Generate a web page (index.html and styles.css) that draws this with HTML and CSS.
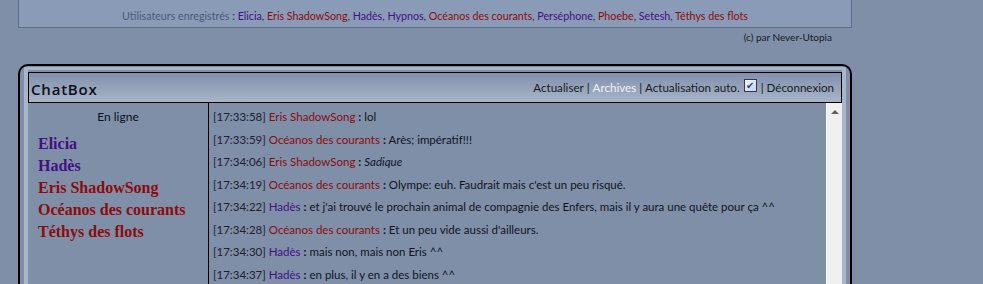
FILE: index.html
```html
<!DOCTYPE html>
<html lang="fr">

<head>
  <meta charset="UTF-8">
  <title>ChatBox</title>
  <link rel="stylesheet" href="styles.css">
</head>

<body>
  <div class="page">
    <div class="online-box">
      <span class="label">Utilisateurs enregistrés</span> :
      <span class="user-purple">Elicia</span>, <span class="user-red">Eris ShadowSong</span>,
      <span class="user-purple">Hadès</span>, <span class="user-purple">Hypnos</span>,
      <span class="user-red">Océanos des courants</span>, <span class="user-purple">Perséphone</span>,
      <span class="user-red">Phoebe</span>, <span class="user-purple">Setesh</span>,
      <span class="user-red">Téthys des flots</span>
    </div>
    <div class="credits">(c) par Never-Utopia</div>

    <div class="chatbox">
      <div class="chatbox-inner">
        <div class="chat-header">
          <div class="chat-title">ChatBox</div>
          <div class="chat-links">
            <a class="link">Actualiser</a> | <a class="link link-active">Archives</a> | <span class="link">Actualisation auto.</span><span class="checkbox">&#10004;</span>| <a class="link">Déconnexion</a>
          </div>
        </div>

        <div class="chat-body">
          <div class="online-list">
            <div class="online-title">En ligne</div>
            <div class="online-name user-purple">Elicia</div>
            <div class="online-name user-purple">Hadès</div>
            <div class="online-name user-red">Eris ShadowSong</div>
            <div class="online-name user-red">Océanos des courants</div>
            <div class="online-name user-red">Téthys des flots</div>
          </div>

          <div class="messages">
            <div class="msg"><span class="time">[17:33:58]</span> <span class="user-red">Eris ShadowSong</span> <b>:</b> lol</div>
            <div class="msg"><span class="time">[17:33:59]</span> <span class="user-red">Océanos des courants</span> <b>:</b> Arès; impératif!!!</div>
            <div class="msg"><span class="time">[17:34:06]</span> <span class="user-red">Eris ShadowSong</span> <b>:</b> <i>Sadique</i></div>
            <div class="msg"><span class="time">[17:34:19]</span> <span class="user-red">Océanos des courants</span> <b>:</b> Olympe: euh. Faudrait mais c'est un peu risqué.</div>
            <div class="msg"><span class="time">[17:34:22]</span> <span class="user-purple">Hadès</span> <b>:</b> et j'ai trouvé le prochain animal de compagnie des Enfers, mais il y aura une quête pour ça ^^</div>
            <div class="msg"><span class="time">[17:34:28]</span> <span class="user-red">Océanos des courants</span> <b>:</b> Et un peu vide aussi d'ailleurs.</div>
            <div class="msg"><span class="time">[17:34:30]</span> <span class="user-purple">Hadès</span> <b>:</b> mais non, mais non Eris ^^</div>
            <div class="msg"><span class="time">[17:34:37]</span> <span class="user-purple">Hadès</span> <b>:</b> en plus, il y en a des biens ^^</div>
          </div>

          <div class="scrollbar">
            <div class="scroll-arrow"></div>
          </div>
        </div>
      </div>
    </div>
  </div>
</body>

</html>
```

FILE: styles.css
```css
body {
  background-color: #7f8fa8;
  font-family: Lato, "Open Sans", Arial, sans-serif;
  color: #10141f;
  margin: 0;
  padding: 0;
  overflow: hidden;
}

.page {
  margin-left: 18px;
  width: 834px;
}

.online-box {
  background-color: #8a9bb7;
  border: 1px solid #5c6c89;
  border-top: none;
  height: 28px;
  box-sizing: border-box;
  padding-top: 8px;
  line-height: 16px;
  text-align: center;
  font-size: 10.7px;
  color: #28304a;
}

.online-box .label {
  color: #4c5a78;
}

.user-purple {
  color: #420f85;
}

.user-red {
  color: #8c0b0b;
}

.credits {
  text-align: right;
  padding-right: 20px;
  font-size: 10px;
  line-height: 14px;
  margin-top: 2px;
  color: #141a28;
}

.chatbox {
  margin-top: 20px;
  border: 2px solid #000;
  border-radius: 10px;
  border-bottom: none;
  border-bottom-left-radius: 0;
  border-bottom-right-radius: 0;
  padding: 1px 4px 0 4px;
}

.chatbox-inner {
  border: 4px solid #a8b5ca;
  border-width: 3px 4px 0 4px;
  padding-top: 2px;
}

.chat-header {
  display: flex;
  justify-content: space-between;
  align-items: center;
  height: 29px;
  border: 1px solid #000;
  background: linear-gradient(to bottom, #8190ab, #a8b5c9);
  padding: 0 7px 0 2px;
}

.chat-title {
  font-family: "Open Sans", Arial, sans-serif;
  font-size: 15px;
  letter-spacing: 0.8px;
  color: #0c0f18;
  font-weight: 600;
  padding-top: 2px;
}

.chat-links {
  font-size: 11.6px;
  color: #141a28;
  display: flex;
  align-items: center;
  white-space: pre;
}

.link-active {
  color: #eef2fa;
}

.checkbox {
  width: 11px;
  height: 11px;
  border: 1px solid #2d3a5c;
  background: linear-gradient(to bottom right, #f4f6fa, #c9d1e0);
  color: #2a3c8a;
  font-size: 10px;
  line-height: 11px;
  text-align: center;
  margin: -4px 4px 0 4px;
}

.chat-body {
  display: flex;
  height: 420px;
}

.online-list {
  width: 180px;
  flex-shrink: 0;
  border-right: 1px solid #000;
  padding-top: 6px;
}

.online-title {
  text-align: center;
  font-size: 12px;
  line-height: 16px;
  margin-bottom: 8px;
  color: #0c0f18;
}

.online-name {
  font-family: "Liberation Serif", "Times New Roman", serif;
  font-weight: bold;
  font-size: 16px;
  line-height: 22px;
  padding-left: 10px;
}

.messages {
  flex: 1;
  min-width: 0;
  padding: 6px 0 0 4px;
  font-size: 11.5px;
}

.msg {
  line-height: 16px;
  margin-bottom: 6.5px;
  white-space: nowrap;
}

.msg b {
  font-weight: bold;
}

.time {
  color: #1c2030;
}

.scrollbar {
  width: 16px;
  flex-shrink: 0;
  background-color: #f0f0f0;
  border-left: 1px solid #fbfbfb;
  display: flex;
  justify-content: center;
  padding-top: 7px;
  box-sizing: border-box;
}

.scroll-arrow {
  width: 0;
  height: 0;
  border-left: 4px solid transparent;
  border-right: 4px solid transparent;
  border-bottom: 4px solid #606060;
}
```
